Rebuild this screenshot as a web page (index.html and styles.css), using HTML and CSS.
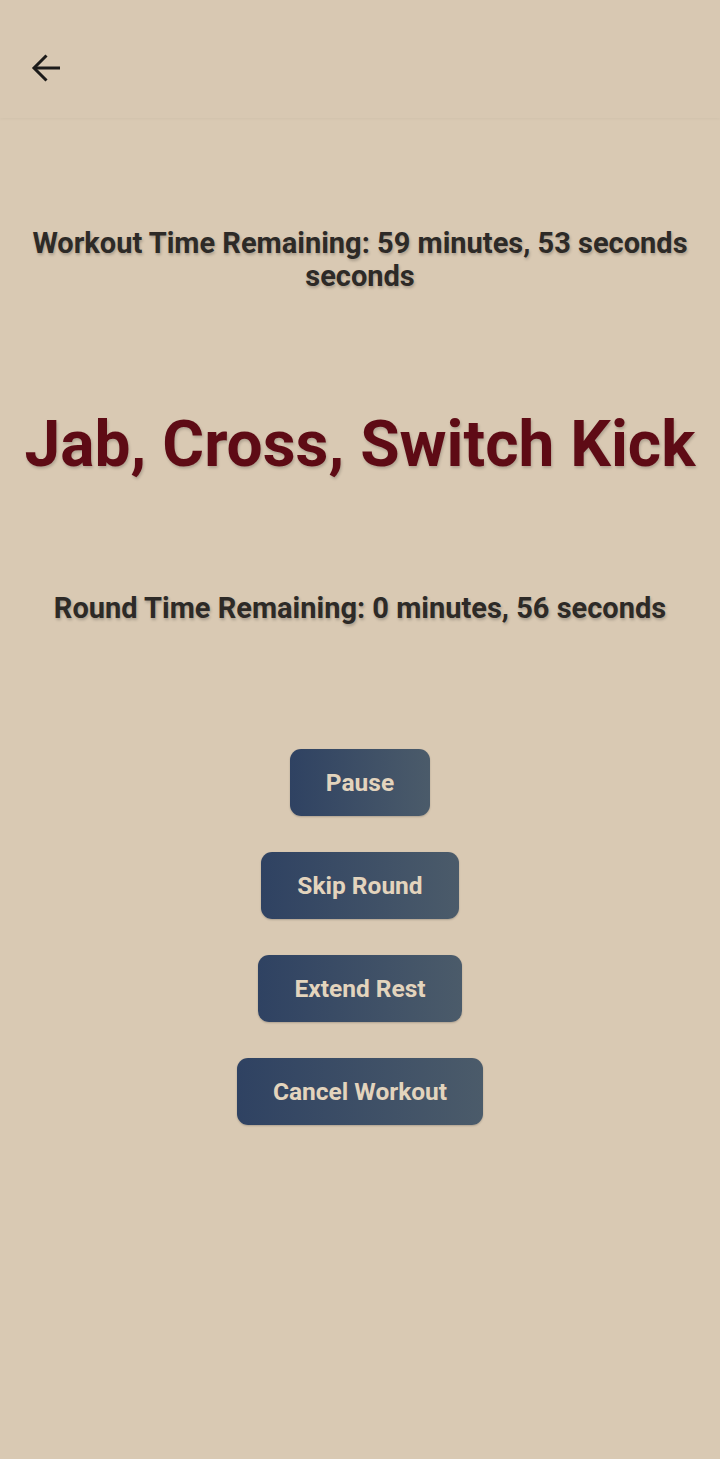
FILE: index.html
```html
<!DOCTYPE html>
<html>
<head>
<meta charset="utf-8">
<link rel="stylesheet" href="styles.css">
</head>
<body>
<div class="app">
  <header class="topbar">
    <button class="back" aria-label="Back">
      <svg width="30" height="30" viewBox="0 0 30 30" fill="none" stroke="#1c1b1a" stroke-width="3" stroke-linecap="butt" stroke-linejoin="miter">
        <path d="M29 15H3"/>
        <path d="M15.5 2.5L3 15l12.5 12.5"/>
      </svg>
    </button>
  </header>
  <main class="content">
    <p class="workout-time">Workout Time Remaining: 59 minutes, 53 seconds seconds</p>
    <h1 class="move">Jab, Cross, Switch Kick</h1>
    <p class="round-time">Round Time Remaining: 0 minutes, 56 seconds</p>
    <div class="actions">
      <button class="btn btn-pause">Pause</button>
      <button class="btn btn-skip">Skip Round</button>
      <button class="btn btn-extend">Extend Rest</button>
      <button class="btn btn-cancel">Cancel Workout</button>
    </div>
  </main>
</div>
</body>
</html>
```
FILE: styles.css
```css
* { box-sizing: border-box; }
html, body {
  margin: 0;
  padding: 0;
  background: #d9c9b3;
  font-family: Roboto, "Liberation Sans", sans-serif;
}
.app {
  width: 720px;
  min-height: 1459px;
  background: #d9c9b3;
}
.topbar {
  height: 118px;
  background: #d8c8b2;
  box-shadow: 0 1px 3px rgba(0,0,0,0.04);
  display: flex;
  align-items: center;
  padding-left: 31px;
}
.back {
  border: 0;
  background: transparent;
  padding: 0;
  width: 30px;
  height: 30px;
  display: flex;
  align-items: center;
  justify-content: center;
  margin-top: 18px;
}
.content {
  display: flex;
  flex-direction: column;
  align-items: center;
  text-align: center;
}
.workout-time {
  margin: 109px 16px 0;
  font-size: 29px;
  line-height: 33px;
  font-weight: 700;
  color: #2d2a27;
  text-shadow: 1px 2px 3px rgba(0,0,0,0.22);
}
.move {
  margin: 114px 0 0;
  font-size: 64px;
  line-height: 76px;
  font-weight: 700;
  color: #5e0b15;
  text-shadow: 1px 2px 3px rgba(0,0,0,0.2);
}
.round-time {
  margin: 109px 0 0;
  font-size: 29px;
  line-height: 33px;
  font-weight: 700;
  color: #2d2a27;
  text-shadow: 1px 2px 3px rgba(0,0,0,0.22);
}
.actions {
  margin-top: 124px;
  display: flex;
  flex-direction: column;
  align-items: center;
  gap: 36px;
}
.btn {
  height: 67px;
  padding: 0 36px;
  border: 0;
  border-radius: 11px;
  background: linear-gradient(90deg, #2f4262 0%, #4b5b6a 100%);
  color: #e3d4bd;
  font-family: Roboto, "Liberation Sans", sans-serif;
  font-size: 24.5px;
  font-weight: 700;
  box-shadow: 0 1px 2px rgba(0,0,0,0.2);
}
```
